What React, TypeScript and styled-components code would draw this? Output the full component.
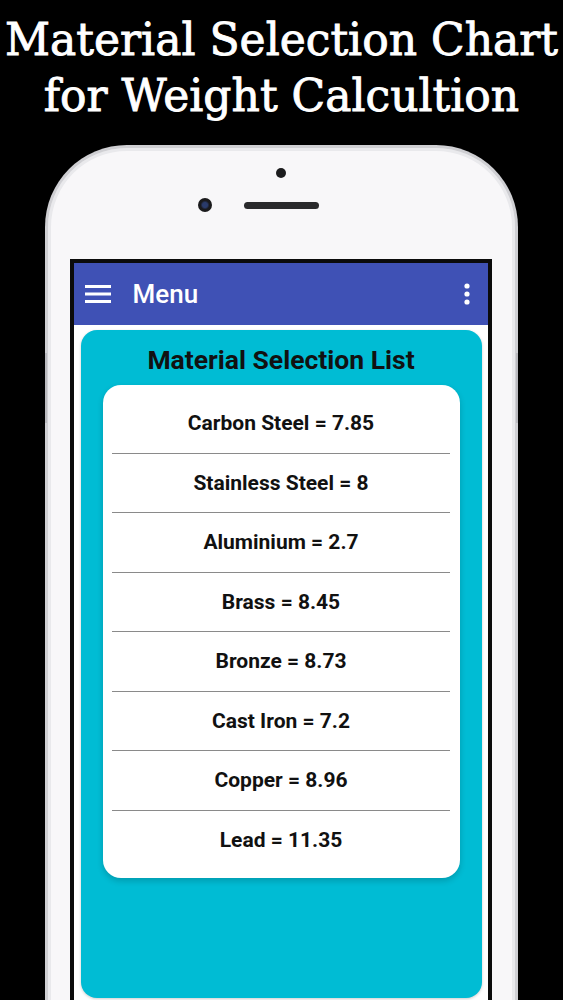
import styled, { createGlobalStyle } from "styled-components";

const materials = [
  "Carbon Steel = 7.85",
  "Stainless Steel = 8",
  "Aluminium = 2.7",
  "Brass = 8.45",
  "Bronze = 8.73",
  "Cast Iron = 7.2",
  "Copper = 8.96",
  "Lead = 11.35",
];

const GlobalStyle = createGlobalStyle`
  html, body {
    margin: 0;
    padding: 0;
    background: #000;
  }
  body {
    height: 1000px;
    overflow: hidden;
  }
`;

const MenuIcon = () => (
  <svg width="26" height="18" viewBox="0 0 26 18">
    <rect x="0" y="0" width="26" height="3" fill="#fff" />
    <rect x="0" y="7.5" width="26" height="3" fill="#fff" />
    <rect x="0" y="15" width="26" height="3" fill="#fff" />
  </svg>
);

const MoreIcon = () => (
  <svg width="6" height="22" viewBox="0 0 6 22">
    <circle cx="3" cy="3" r="2.6" fill="#fff" />
    <circle cx="3" cy="11" r="2.6" fill="#fff" />
    <circle cx="3" cy="19" r="2.6" fill="#fff" />
  </svg>
);

const App = () => {
  return (
    <Page>
      <GlobalStyle />
      <Heading>
        Material Selection Chart
        <br />
        for Weight Calcultion
      </Heading>

      <Phone>
        <PhoneHead>
          <TopDot />
          <SensorRow>
            <Camera />
            <Speaker />
            <span />
          </SensorRow>
        </PhoneHead>

        <Screen>
          <AppBar>
            <MenuIcon />
            <AppTitle>Menu</AppTitle>
            <MoreButton>
              <MoreIcon />
            </MoreButton>
          </AppBar>

          <Panel>
            <PanelTitle>Material Selection List</PanelTitle>
            <ListCard>
              {materials.map((m) => (
                <ListRow key={m}>{m}</ListRow>
              ))}
            </ListCard>
          </Panel>
        </Screen>
      </Phone>
    </Page>
  );
};

export default App;

const Page = styled.div`
  height: 1000px;
  overflow: hidden;
  background: #000;
  display: flex;
  flex-direction: column;
  align-items: center;
`;

const Heading = styled.h1`
  margin: 12px 0 0;
  color: #fff;
  font-family: "DejaVu Serif", serif;
  font-weight: normal;
  font-size: 44px;
  line-height: 56px;
  text-align: center;
  white-space: nowrap;
  -webkit-text-stroke: 0.9px #fff;
`;

const Phone = styled.div`
  position: relative;
  margin: 21px 1px 0 0;
  width: 473px;
  height: 900px;
  flex-shrink: 0;
  box-sizing: border-box;
  border: 3px solid #cfcfd3;
  border-bottom: none;
  border-radius: 82px 82px 0 0;
  background: #f8f7f9;
  box-shadow: inset 0 0 0 3px #e9e9ec;

  &::before,
  &::after {
    content: "";
    position: absolute;
    top: 205px;
    width: 2px;
    height: 70px;
    background: #b9b9be;
  }
  &::before {
    left: -3px;
  }
  &::after {
    right: -3px;
  }
`;

const PhoneHead = styled.div`
  display: flex;
  flex-direction: column;
  align-items: center;
  padding-top: 20px;
`;

const TopDot = styled.div`
  width: 10px;
  height: 10px;
  border-radius: 50%;
  background: #1c1c1e;
`;

const SensorRow = styled.div`
  margin-top: 20px;
  width: 100%;
  display: grid;
  grid-template-columns: 1fr auto 1fr;
  align-items: center;
`;

const Camera = styled.div`
  justify-self: end;
  margin-right: 32px;
  width: 14px;
  height: 14px;
  border-radius: 50%;
  background: radial-gradient(circle at 50% 50%, #2a3b6a 0 25%, #1a1a1c 45%);
`;

const Speaker = styled.div`
  width: 75px;
  height: 7px;
  border-radius: 4px;
  background: #2a2a2c;
`;

const Screen = styled.div`
  margin: 47px 23px 0 22px;
  height: 760px;
  border: 4px solid #0b0b0b;
  border-bottom: none;
  background: #fff;
  display: flex;
  flex-direction: column;
`;

const AppBar = styled.div`
  height: 62px;
  flex-shrink: 0;
  display: flex;
  align-items: center;
  padding: 0 18px 0 11px;
  background: #3f51b5;
`;

const AppTitle = styled.div`
  margin-left: 22px;
  color: #fff;
  font-family: Roboto, "Noto Sans", sans-serif;
  font-weight: 500;
  font-size: 26px;
`;

const MoreButton = styled.div`
  margin-left: auto;
  display: flex;
`;

const Panel = styled.div`
  margin: 5px 6px 0 7px;
  height: 668px;
  border-radius: 16px;
  background: #00bcd4;
  display: flex;
  flex-direction: column;
  align-items: center;
  box-shadow: 0 1px 3px rgba(0, 0, 0, 0.2);
`;

const PanelTitle = styled.div`
  margin: 15px 0 10px;
  line-height: 30px;
  color: #111;
  font-family: Roboto, "Noto Sans", sans-serif;
  font-weight: bold;
  font-size: 26.5px;
`;

const ListCard = styled.div`
  width: 357px;
  box-sizing: border-box;
  margin-left: 1px;
  padding: 9px 10px 8px 9px;
  border-radius: 18px;
  background: #fff;
  box-shadow: 0 3px 6px rgba(0, 0, 0, 0.18);
`;

const ListRow = styled.div`
  height: 59.5px;
  box-sizing: border-box;
  display: flex;
  align-items: center;
  justify-content: center;
  color: #111;
  font-family: Roboto, "Noto Sans", sans-serif;
  font-weight: bold;
  font-size: 21px;
  border-bottom: 1px solid #8a8a8a;

  &:last-child {
    border-bottom: none;
  }
`;
